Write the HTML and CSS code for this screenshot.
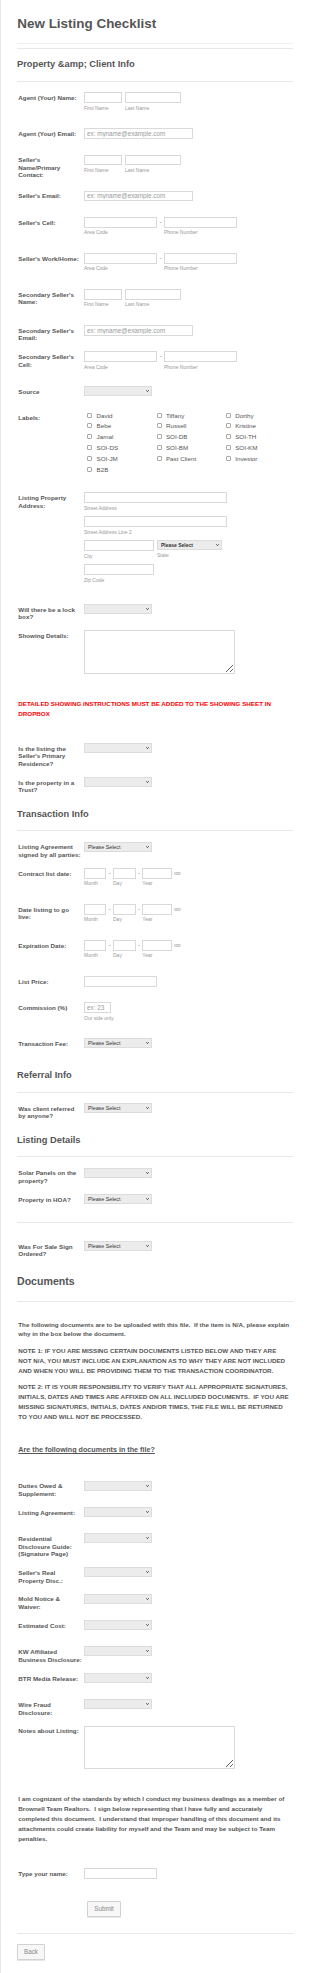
FILE: index.html
```html
<!DOCTYPE html>
<html lang="en">
<head>
<meta charset="utf-8">
<title>New Listing Checklist</title>
<link rel="stylesheet" href="styles.css">
</head>
<body>
<div class="page">
<form class="form">
  <header class="form-title"><h1>New Listing Checklist</h1></header>

  <h2 class="section-head section-head--first">Property &amp;amp; Client Info</h2>

  <div class="row">
    <label class="lbl">Agent (Your) Name:</label>
    <div class="field combo">
      <span class="part"><input class="in w-first"><span class="sub">First Name</span></span>
      <span class="part gap-name"><input class="in w-last"><span class="sub">Last Name</span></span>
    </div>
  </div>
  <div class="row">
    <label class="lbl">Agent (Your) Email:</label>
    <div class="field"><input class="in w-email" placeholder="ex: myname@example.com"></div>
  </div>
  <div class="row">
    <label class="lbl">Seller's<br>Name/Primary<br>Contact:</label>
    <div class="field combo">
      <span class="part"><input class="in w-first"><span class="sub">First Name</span></span>
      <span class="part gap-name"><input class="in w-last"><span class="sub">Last Name</span></span>
    </div>
  </div>
  <div class="row">
    <label class="lbl">Seller's Email:</label>
    <div class="field"><input class="in w-email" placeholder="ex: myname@example.com"></div>
  </div>
  <div class="row">
    <label class="lbl">Seller's Cell:</label>
    <div class="field combo">
      <span class="part"><input class="in w-phone"><span class="sub">Area Code</span></span>
      <span class="dash">-</span>
      <span class="part"><input class="in w-phone"><span class="sub">Phone Number</span></span>
    </div>
  </div>
  <div class="row">
    <label class="lbl">Seller's Work/Home:</label>
    <div class="field combo">
      <span class="part"><input class="in w-phone"><span class="sub">Area Code</span></span>
      <span class="dash">-</span>
      <span class="part"><input class="in w-phone"><span class="sub">Phone Number</span></span>
    </div>
  </div>
  <div class="row">
    <label class="lbl">Secondary Seller's<br>Name:</label>
    <div class="field combo">
      <span class="part"><input class="in w-first"><span class="sub">First Name</span></span>
      <span class="part gap-name"><input class="in w-last"><span class="sub">Last Name</span></span>
    </div>
  </div>
  <div class="row">
    <label class="lbl">Secondary Seller's<br>Email:</label>
    <div class="field"><input class="in w-email" placeholder="ex: myname@example.com"></div>
  </div>
  <div class="row">
    <label class="lbl">Secondary Seller's<br>Cell:</label>
    <div class="field combo">
      <span class="part"><input class="in w-phone"><span class="sub">Area Code</span></span>
      <span class="dash">-</span>
      <span class="part"><input class="in w-phone"><span class="sub">Phone Number</span></span>
    </div>
  </div>
  <div class="row row--lift">
    <label class="lbl">Source</label>
    <div class="field"><span class="sel"><select><option></option></select><svg viewBox="0 0 3 2"><polyline points="0.3,0.3 1.5,1.6 2.7,0.3"/></svg></span></div>
  </div>
  <div class="row">
    <label class="lbl">Labels:</label>
    <div class="field checks">
      <label class="check"><span class="box"></span>David</label>
      <label class="check"><span class="box"></span>Tiffany</label>
      <label class="check"><span class="box"></span>Dorthy</label>
      <label class="check"><span class="box"></span>Bebe</label>
      <label class="check"><span class="box"></span>Russell</label>
      <label class="check"><span class="box"></span>Kristine</label>
      <label class="check"><span class="box"></span>Jamal</label>
      <label class="check"><span class="box"></span>SOI-DB</label>
      <label class="check"><span class="box"></span>SOI-TH</label>
      <label class="check"><span class="box"></span>SOI-DS</label>
      <label class="check"><span class="box"></span>SOI-BM</label>
      <label class="check"><span class="box"></span>SOI-KM</label>
      <label class="check"><span class="box"></span>SOI-JM</label>
      <label class="check"><span class="box"></span>Past Client</label>
      <label class="check"><span class="box"></span>Investor</label>
      <label class="check"><span class="box"></span>B2B</label>
    </div>
  </div>
  <div class="row">
    <label class="lbl">Listing Property<br>Address:</label>
    <div class="field addr">
      <div class="addr-line"><input class="in w-street"><span class="sub">Street Address</span></div>
      <div class="addr-line"><input class="in w-street"><span class="sub">Street Address Line 2</span></div>
      <div class="addr-line combo">
        <span class="part"><input class="in w-city"><span class="sub">City</span></span>
        <span class="part gap-state"><span class="sel sel--state"><select><option>Please Select</option></select><svg viewBox="0 0 3 2"><polyline points="0.3,0.3 1.5,1.6 2.7,0.3"/></svg></span><span class="sub">State</span></span>
      </div>
      <div class="addr-line"><input class="in w-city"><span class="sub">Zip Code</span></div>
    </div>
  </div>
  <div class="row">
    <label class="lbl">Will there be a lock<br>box?</label>
    <div class="field"><span class="sel"><select><option></option></select><svg viewBox="0 0 3 2"><polyline points="0.3,0.3 1.5,1.6 2.7,0.3"/></svg></span></div>
  </div>
  <div class="row">
    <label class="lbl">Showing Details:</label>
    <div class="field"><textarea class="area"></textarea></div>
  </div>

  <p class="alert">DETAILED SHOWING INSTRUCTIONS MUST BE ADDED TO THE SHOWING SHEET IN<br>DROPBOX</p>

  <div class="row">
    <label class="lbl">Is the listing the<br>Seller's Primary<br>Residence?</label>
    <div class="field"><span class="sel"><select><option></option></select><svg viewBox="0 0 3 2"><polyline points="0.3,0.3 1.5,1.6 2.7,0.3"/></svg></span></div>
  </div>
  <div class="row">
    <label class="lbl">Is the property in a<br>Trust?</label>
    <div class="field"><span class="sel"><select><option></option></select><svg viewBox="0 0 3 2"><polyline points="0.3,0.3 1.5,1.6 2.7,0.3"/></svg></span></div>
  </div>

  <h2 class="section-head">Transaction Info</h2>

  <div class="row">
    <label class="lbl">Listing Agreement<br>signed by all parties:</label>
    <div class="field"><span class="sel"><select><option>Please Select</option></select><svg viewBox="0 0 3 2"><polyline points="0.3,0.3 1.5,1.6 2.7,0.3"/></svg></span></div>
  </div>
  <div class="row">
    <label class="lbl">Contract list date:</label>
    <div class="field combo">
      <span class="part"><input class="in w-month"><span class="sub">Month</span></span>
      <span class="dash">-</span>
      <span class="part"><input class="in w-day"><span class="sub">Day</span></span>
      <span class="dash">-</span>
      <span class="part"><input class="in w-year"><span class="sub">Year</span></span>
      <span class="cal"></span>
    </div>
  </div>
  <div class="row">
    <label class="lbl">Date listing to go<br>live:</label>
    <div class="field combo">
      <span class="part"><input class="in w-month"><span class="sub">Month</span></span>
      <span class="dash">-</span>
      <span class="part"><input class="in w-day"><span class="sub">Day</span></span>
      <span class="dash">-</span>
      <span class="part"><input class="in w-year"><span class="sub">Year</span></span>
      <span class="cal"></span>
    </div>
  </div>
  <div class="row">
    <label class="lbl">Expiration Date:</label>
    <div class="field combo">
      <span class="part"><input class="in w-month"><span class="sub">Month</span></span>
      <span class="dash">-</span>
      <span class="part"><input class="in w-day"><span class="sub">Day</span></span>
      <span class="dash">-</span>
      <span class="part"><input class="in w-year"><span class="sub">Year</span></span>
      <span class="cal"></span>
    </div>
  </div>
  <div class="row">
    <label class="lbl">List Price:</label>
    <div class="field"><input class="in w-short"></div>
  </div>
  <div class="row">
    <label class="lbl">Commission (%)</label>
    <div class="field"><input class="in w-pct" placeholder="ex: 23"><span class="sub">Our side only.</span></div>
  </div>
  <div class="row">
    <label class="lbl">Transaction Fee:</label>
    <div class="field"><span class="sel"><select><option>Please Select</option></select><svg viewBox="0 0 3 2"><polyline points="0.3,0.3 1.5,1.6 2.7,0.3"/></svg></span></div>
  </div>

  <h2 class="section-head">Referral Info</h2>

  <div class="row">
    <label class="lbl">Was client referred<br>by anyone?</label>
    <div class="field"><span class="sel"><select><option>Please Select</option></select><svg viewBox="0 0 3 2"><polyline points="0.3,0.3 1.5,1.6 2.7,0.3"/></svg></span></div>
  </div>

  <h2 class="section-head">Listing Details</h2>

  <div class="row">
    <label class="lbl">Solar Panels on the<br>property?</label>
    <div class="field"><span class="sel"><select><option></option></select><svg viewBox="0 0 3 2"><polyline points="0.3,0.3 1.5,1.6 2.7,0.3"/></svg></span></div>
  </div>
  <div class="row">
    <label class="lbl">Property in HOA?</label>
    <div class="field"><span class="sel"><select><option>Please Select</option></select><svg viewBox="0 0 3 2"><polyline points="0.3,0.3 1.5,1.6 2.7,0.3"/></svg></span></div>
  </div>
  <hr class="divider">
  <div class="row">
    <label class="lbl">Was For Sale Sign<br>Ordered?</label>
    <div class="field"><span class="sel"><select><option>Please Select</option></select><svg viewBox="0 0 3 2"><polyline points="0.3,0.3 1.5,1.6 2.7,0.3"/></svg></span></div>
  </div>

  <h2 class="section-head section-head--lg">Documents</h2>

  <p class="doc-text doc-intro">The following documents are to be uploaded with this file.&nbsp; If the item is N/A, please explain<br>why in the box below the document.</p>
  <p class="doc-text doc-note">NOTE 1: IF YOU ARE MISSING CERTAIN DOCUMENTS LISTED BELOW AND THEY ARE<br>NOT N/A, YOU MUST INCLUDE AN EXPLANATION AS TO WHY THEY ARE NOT INCLUDED<br>AND WHEN YOU WILL BE PROVIDING THEM TO THE TRANSACTION COORDINATOR.</p>
  <p class="doc-text doc-note">NOTE 2: IT IS YOUR RESPONSIBILITY TO VERIFY THAT ALL APPROPRIATE SIGNATURES,<br>INITIALS, DATES AND TIMES ARE AFFIXED ON ALL INCLUDED DOCUMENTS.&nbsp; IF YOU ARE<br>MISSING SIGNATURES, INITIALS, DATES AND/OR TIMES, THE FILE WILL BE RETURNED<br>TO YOU AND WILL NOT BE PROCESSED.</p>
  <p class="doc-question">Are the following documents in the file?</p>

  <div class="row">
    <label class="lbl">Duties Owed &amp;<br>Supplement:</label>
    <div class="field"><span class="sel"><select><option></option></select><svg viewBox="0 0 3 2"><polyline points="0.3,0.3 1.5,1.6 2.7,0.3"/></svg></span></div>
  </div>
  <div class="row">
    <label class="lbl">Listing Agreement:</label>
    <div class="field"><span class="sel"><select><option></option></select><svg viewBox="0 0 3 2"><polyline points="0.3,0.3 1.5,1.6 2.7,0.3"/></svg></span></div>
  </div>
  <div class="row">
    <label class="lbl">Residential<br>Disclosure Guide:<br>(Signature Page)</label>
    <div class="field"><span class="sel"><select><option></option></select><svg viewBox="0 0 3 2"><polyline points="0.3,0.3 1.5,1.6 2.7,0.3"/></svg></span></div>
  </div>
  <div class="row">
    <label class="lbl">Seller's Real<br>Property Disc.:</label>
    <div class="field"><span class="sel"><select><option></option></select><svg viewBox="0 0 3 2"><polyline points="0.3,0.3 1.5,1.6 2.7,0.3"/></svg></span></div>
  </div>
  <div class="row">
    <label class="lbl">Mold Notice &amp;<br>Waiver:</label>
    <div class="field"><span class="sel"><select><option></option></select><svg viewBox="0 0 3 2"><polyline points="0.3,0.3 1.5,1.6 2.7,0.3"/></svg></span></div>
  </div>
  <div class="row">
    <label class="lbl">Estimated Cost:</label>
    <div class="field"><span class="sel"><select><option></option></select><svg viewBox="0 0 3 2"><polyline points="0.3,0.3 1.5,1.6 2.7,0.3"/></svg></span></div>
  </div>
  <div class="row">
    <label class="lbl">KW Affiliated<br>Business Disclosure:</label>
    <div class="field"><span class="sel"><select><option></option></select><svg viewBox="0 0 3 2"><polyline points="0.3,0.3 1.5,1.6 2.7,0.3"/></svg></span></div>
  </div>
  <div class="row">
    <label class="lbl">BTR Media Release:</label>
    <div class="field"><span class="sel"><select><option></option></select><svg viewBox="0 0 3 2"><polyline points="0.3,0.3 1.5,1.6 2.7,0.3"/></svg></span></div>
  </div>
  <div class="row">
    <label class="lbl">Wire Fraud<br>Disclosure:</label>
    <div class="field"><span class="sel"><select><option></option></select><svg viewBox="0 0 3 2"><polyline points="0.3,0.3 1.5,1.6 2.7,0.3"/></svg></span></div>
  </div>
  <div class="row">
    <label class="lbl">Notes about Listing:</label>
    <div class="field"><textarea class="area"></textarea></div>
  </div>

  <p class="doc-text closing">I am cognizant of the standards by which I conduct my business dealings as a member of<br>Brownell Team Realtors.&nbsp; I sign below representing that I have fully and accurately<br>completed this document.&nbsp; I understand that improper handling of this document and its<br>attachments could create liability for myself and the Team and may be subject to Team<br>penalties.</p>

  <div class="row">
    <label class="lbl">Type your name:</label>
    <div class="field"><input class="in w-short"></div>
  </div>

  <div class="actions"><button type="button" class="btn btn-submit">Submit</button></div>
  <div class="footer"><button type="button" class="btn btn-back">Back</button></div>
</form>
</div>
</body>
</html>
```
FILE: styles.css
```css
* { box-sizing: border-box; margin: 0; padding: 0; }

html, body { background: #fff; }

body {
  font-family: "Liberation Sans", Arial, sans-serif;
  color: #555;
}

.page {
  border-left: 1px solid #e6e6e6;
  min-height: 100vh;
}

.form {
  padding: 0 17px 0 16px;
}

/* title */
.form-title {
  padding: 15.8px 0 10.9px;
  border-bottom: 1px solid #f1f1f1;
  margin-bottom: 4.6px;
}
.form-title h1 {
  font-size: 13.45px;
  line-height: 16px;
  font-weight: bold;
  color: #555;
  padding-left: 0.3px;
}

/* section headings */
.section-head {
  font-size: 9.3px;
  line-height: 11px;
  font-weight: bold;
  color: #555;
  padding: 10px 0 10.6px;
  border-bottom: 1px solid #e8e8e8;
  margin-bottom: 5.6px;
}
.section-head--first {
  border-top: 1px solid #e8e8e8;
  padding-top: 10.2px;
  padding-bottom: 10.5px;
  margin-bottom: 5.5px;
}
.section-head--lg {
  font-size: 10.6px;
  line-height: 12px;
  padding: 13px 0 13.5px;
}

/* rows */
.row {
  display: grid;
  grid-template-columns: 67px 1fr;
  align-items: start;
  padding: 4.8px 0;
  min-height: 26.4px;
}
.row--lift { margin-top: -1.5px; }

.lbl {
  padding: 1.75px 0 0 1.3px;
  font-size: 6.25px;
  line-height: 7.5px;
  font-weight: bold;
  color: #555;
  white-space: nowrap;
}

.field { min-width: 0; }

.combo {
  display: flex;
  align-items: flex-start;
}
.part { display: block; }
.gap-name { margin-left: 2.6px; }
.gap-state { margin-left: 3.3px; }

.dash {
  width: 6.6px;
  text-align: center;
  font-size: 6.3px;
  line-height: 10.6px;
  color: #999;
}

/* text inputs */
.in {
  display: block;
  height: 10.6px;
  border: 1px solid #d9d9d9;
  border-radius: 0;
  background: #fff;
  padding: 0 2px;
  font-family: "Liberation Sans", Arial, sans-serif;
  font-size: 6.3px;
  color: #555;
  outline: none;
}
.in::placeholder { color: #9a9a9a; }

.w-first { width: 38.4px; }
.w-last { width: 55.7px; }
.w-email { width: 109.4px; }
.w-phone { width: 73.4px; }
.w-street { width: 142.7px; }
.w-city { width: 69.7px; }
.w-month { width: 22.4px; }
.w-day { width: 22.7px; }
.w-year { width: 29.3px; }
.w-short { width: 73.3px; }
.w-pct { width: 26.7px; }

.sub {
  display: block;
  font-size: 5px;
  line-height: 6px;
  margin: 1.8px 0 8px;
  color: #999;
  white-space: nowrap;
}

/* date picker icon */
.cal {
  width: 7px;
  height: 3px;
  margin: 3.8px 0 0 2.7px;
  border: 1px solid #c4c4c4;
  border-radius: 2px;
  background: #e4e4e4;
}

/* selects */
.sel {
  position: relative;
  display: block;
  width: 67.7px;
  height: 10px;
}
.sel select {
  -webkit-appearance: none;
  appearance: none;
  display: block;
  width: 100%;
  height: 10px;
  border: 1px solid #dcdcdc;
  border-radius: 0;
  background: #ececec;
  padding: 0 0 0 3px;
  font-family: "Liberation Sans", Arial, sans-serif;
  font-size: 5.3px;
  color: #333;
  outline: none;
}
.sel svg {
  position: absolute;
  right: 2.5px;
  top: 4px;
  width: 3px;
  height: 2px;
  fill: none;
  stroke: #333;
  stroke-width: 0.9;
  pointer-events: none;
}
.sel--state { width: 64.7px; }
.sel--state select { font-weight: bold; font-size: 5px; }

/* checkboxes */
.checks {
  display: grid;
  grid-template-columns: repeat(3, 69.3px);
  padding-left: 3.3px;
  margin: -2.5px 0 8.3px;
}
.check {
  display: flex;
  align-items: center;
  height: 10.8px;
  font-size: 6.25px;
  color: #555;
  white-space: nowrap;
}
.box {
  flex: none;
  width: 5px;
  height: 5px;
  border: 1px solid #a9a9a9;
  border-radius: 1px;
  background: #fff;
  margin-right: 4.3px;
}

/* address */
.addr { padding-bottom: 6px; }
.addr .sub { margin-bottom: 5.6px; }

/* textareas */
.area {
  display: block;
  width: 150.7px;
  height: 43.7px;
  border: 1px solid #d9d9d9;
  border-radius: 0;
  background: #fff;
  resize: both;
  outline: none;
}

/* red notice */
.alert {
  padding: 20px 0 19px 1.3px;
  font-size: 6.25px;
  line-height: 10.3px;
  font-weight: bold;
  color: #f00;
  white-space: nowrap;
}

/* divider */
.divider {
  border: 0;
  border-top: 1px solid #e8e8e8;
  margin: 6.6px 0 12.9px;
}

/* documents text */
.doc-text {
  padding-left: 1.3px;
  font-size: 6.25px;
  font-weight: bold;
  color: #555;
  white-space: nowrap;
}
.doc-intro {
  line-height: 8.6px;
  margin: 19.1px 0 8.1px;
}
.doc-note {
  line-height: 10.1px;
  margin-bottom: 5.5px;
}
.doc-question {
  padding-left: 1.3px;
  font-size: 7.2px;
  line-height: 8px;
  font-weight: bold;
  color: #555;
  text-decoration: underline;
  margin: 23.7px 0 21.8px;
}
.closing {
  line-height: 10.07px;
  padding: 19.8px 0 19.2px 1.3px;
}

/* buttons */
.actions {
  padding: 10.7px 0 16px 70.3px;
}
.footer {
  border-top: 1px solid #e8e8e8;
  padding: 10px 0 11px;
}
.btn {
  display: block;
  height: 16px;
  border: 1px solid #d2d2d2;
  border-radius: 1px;
  background: #f7f7f7;
  font-family: "Liberation Sans", Arial, sans-serif;
  font-size: 6.3px;
  color: #888;
  box-shadow: 0 1px 0 #e6e6e6;
}
.btn-submit { width: 33.4px; }
.btn-back { width: 27.4px; height: 16.7px; margin-left: 0.3px; }
```
